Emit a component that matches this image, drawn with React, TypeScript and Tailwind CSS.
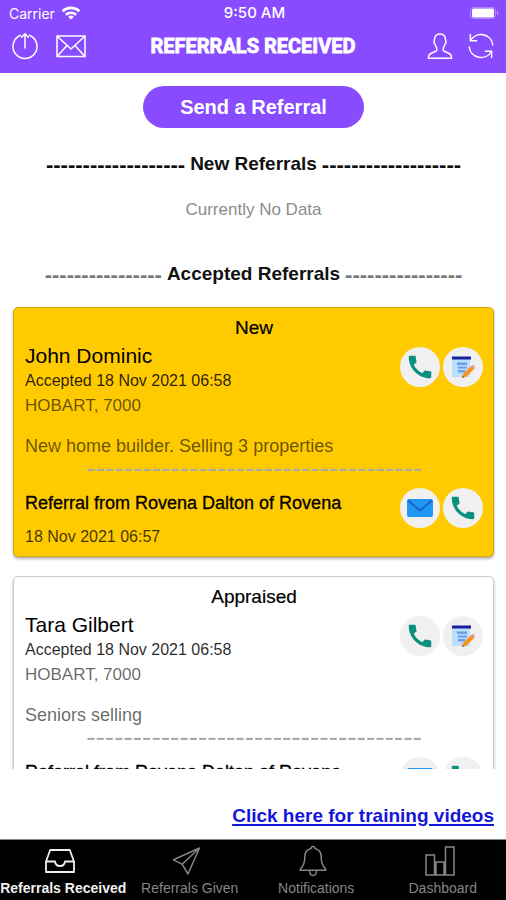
import type { ReactNode } from "react";
import { MdCall } from "react-icons/md";

const SANS = "font-['Liberation_Sans',Arial,sans-serif]";

function LineIcon({ children, size, thick = 1.5 }: { children: ReactNode; size: string; thick?: number }) {
  return (
    <svg
      className={size}
      viewBox="0 0 32 32"
      fill="none"
      stroke="currentColor"
      strokeWidth={thick}
      strokeLinejoin="round"
      strokeLinecap="round"
      aria-hidden="true"
    >
      {children}
    </svg>
  );
}

function WifiIcon() {
  return (
    <svg className="h-4 w-5" viewBox="0 0 20 16" aria-hidden="true">
      <g fill="none" stroke="currentColor" strokeWidth="2.6">
        <path d="M1.6 6.2a12.2 12.2 0 0 1 16.8 0" />
        <path d="M4.9 9.8a7.4 7.4 0 0 1 10.2 0" />
      </g>
      <path d="M10 14.6 7.2 11.9a4 4 0 0 1 5.6 0z" fill="currentColor" />
    </svg>
  );
}

function BatteryIcon() {
  return (
    <svg className="h-3 w-[30px]" viewBox="0 0 30 12" aria-hidden="true">
      <rect x="0.5" y="0.5" width="25" height="11" rx="3" fill="none" stroke="currentColor" opacity="0.35" />
      <rect x="2" y="1.5" width="22" height="9" rx="1.5" fill="currentColor" />
      <path d="M27 4v4c1.6-.6 1.6-3.4 0-4z" fill="currentColor" opacity="0.6" />
    </svg>
  );
}

function Header() {
  return (
    <header className="shrink-0 bg-[#884bff] pb-[7px] text-white">
      <div className="grid h-[26px] grid-cols-[1fr_auto_1fr] items-center pr-[6px] pl-[9px] font-['Inter',sans-serif] text-[14px]">
        <span className="flex items-center gap-[6px]">
          Carrier <WifiIcon />
        </span>
        <span className="text-[15px] font-medium">9:50 AM</span>
        <span className="justify-self-end">
          <BatteryIcon />
        </span>
      </div>
      <div className="grid h-10 grid-cols-[1fr_auto_1fr] items-center px-[9px]">
        <div className="flex items-center gap-[14px]">
          <button type="button" aria-label="Log out">
            <LineIcon size="size-8">
              <path d="M11.6 5.3a12 12 0 1 0 8.8 0" />
              <path d="M16 18V4M12.6 7.2 16 3.8l3.4 3.4" />
            </LineIcon>
          </button>
          <button type="button" aria-label="Messages">
            <LineIcon size="size-8">
              <path d="M2 6h28v20.500H2zM2.500 6.500 16 19 29.500 6.500M2.500 26l9.500-10.500M29.500 26 20 15.500" strokeLinejoin="miter" />
            </LineIcon>
          </button>
        </div>
        <h1 className="font-['Roboto','Liberation_Sans',sans-serif] text-[20px] font-bold [-webkit-text-stroke:0.8px_white]">
          REFERRALS RECEIVED
        </h1>
        <div className="flex items-center justify-end gap-[9px]">
          <button type="button" aria-label="Profile">
            <LineIcon size="size-8">
              <path d="M16 4c-3.800 0-5.800 2.400-5.600 6 0 1-.600 1.500-.300 2.600.2.900.9 1 1 1.800.3 1.800 1.300 2.600 1.600 3.600.3 1.200.1 2-.3 2.800-1.300 1.500-6.600 2-7.600 4.700-.4 1-.400 1.800-.400 2.700h23.200c0-.900 0-1.700-.400-2.700-1-2.700-6.300-3.200-7.600-4.700-.4-.8-.6-1.600-.3-2.800.3-1 1.300-1.800 1.600-3.600.1-.8.8-.9 1-1.800.3-1.100-.3-1.600-.3-2.600.2-3.600-1.800-6-5.600-6z" />
            </LineIcon>
          </button>
          <button type="button" aria-label="Refresh">
            <LineIcon size="size-8">
              <path d="M5.500 10.500A12 12 0 0 1 27.800 15M26.500 21.500A12 12 0 0 1 4.200 17" />
              <path d="M5.400 4.500v6.200h6.200M26.600 27.500v-6.200h-6.200" />
            </LineIcon>
          </button>
        </div>
      </div>
    </header>
  );
}

function SectionHeading({ title, dashes, tone }: { title: string; dashes: number; tone: string }) {
  const line = "-".repeat(dashes);
  return (
    <h2 className="flex h-6 items-center justify-center gap-[5px] text-[19px] font-bold whitespace-nowrap text-[#111]">
      <span className={`text-[22px] ${tone}`}>{line}</span>
      {title}
      <span className={`text-[22px] ${tone}`}>{line}</span>
    </h2>
  );
}

function RoundButton({ label, children }: { label: string; children: ReactNode }) {
  return (
    <button type="button" aria-label={label} className="flex size-10 items-center justify-center rounded-full bg-[#f0f0f0]">
      {children}
    </button>
  );
}

function CallButton() {
  return (
    <RoundButton label="Call">
      <MdCall className="size-[30px] text-[#0b9080]" />
    </RoundButton>
  );
}

function NoteButton() {
  return (
    <RoundButton label="Edit notes">
      <svg className="size-6" viewBox="0 0 24 24" aria-hidden="true">
        <path d="M1 3h18v19H1z" fill="#bbdefb" />
        <path d="M1 1.500h19v3H1z" fill="#1a1f9c" />
        <path d="M6 7.500h10v2.500H6zm1 4h9v2H7zm0 3.500h7v2.500H7z" fill="#6e9ee8" />
        <path d="m11 23 1.200-4.200 8-7.800 3 3-8 7.800z" fill="#f7941d" />
        <path d="m20.200 11 .8-.7c1.600-.6 3 1.200 2.600 2.600l-.4 1.100z" fill="#e8879c" />
        <path d="m11 23 .7-2.300 1.700 1.600z" fill="#8d5a3a" />
      </svg>
    </RoundButton>
  );
}

function MailButton() {
  return (
    <RoundButton label="Email">
      <svg className="h-5 w-[26px]" viewBox="0 0 26 20" aria-hidden="true">
        <rect x="0" y="1" width="26" height="18" rx="2" fill="#2196f3" />
        <path d="M1 2.500 13 12.500 25 2.500" fill="none" stroke="#1565c0" strokeWidth="1.800" />
      </svg>
    </RoundButton>
  );
}

type Referral = { status: string; name: string; note: string; highlighted: boolean };

const referrals: Referral[] = [
  { status: "New", name: "John Dominic", note: "New home builder. Selling 3 properties", highlighted: true },
  { status: "Appraised", name: "Tara Gilbert", note: "Seniors selling", highlighted: false },
];

function ReferralCard({ status, name, note, highlighted }: Referral) {
  return (
    <article
      className={`rounded-[5px] border pt-2 pr-[10px] pb-[7px] pl-[11px] shadow-[0_2px_3px_rgba(0,0,0,0.3)] ${
        highlighted ? "border-[#d0a80c] bg-[#ffcb00]" : "border-[#ccc] bg-white"
      }`}
    >
      <h3 className="text-center text-[19px] leading-6 text-black [-webkit-text-stroke:0.2px_black]">{status}</h3>
      <div className="mt-[3px] flex justify-between">
        <div className="text-[17px] leading-[25px] text-black/60">
          <p className="text-[21px] text-black">{name}</p>
          <p className="text-[16px] text-black/85">Accepted 18 Nov 2021 06:58</p>
          <p>HOBART, 7000</p>
          <p className="mt-4 text-[18px] whitespace-nowrap">{note}</p>
        </div>
        <div className="mt-1 flex shrink-0 gap-[3px] self-start">
          <CallButton />
          <NoteButton />
        </div>
      </div>
      <p className="text-center text-[28px] leading-[18px] whitespace-nowrap text-[#aaa]">{"-".repeat(36)}</p>
      <div className="mt-[11px] flex justify-between">
        <div className="pt-[3px] leading-[25px]">
          <p className="text-[18px] whitespace-nowrap text-black [-webkit-text-stroke:0.3px_black]">
            Referral from Rovena Dalton of Rovena
          </p>
          <p className="mt-2 text-[16px] text-black/75">18 Nov 2021 06:57</p>
        </div>
        <div className="flex shrink-0 gap-[3px] self-start">
          <MailButton />
          <CallButton />
        </div>
      </div>
    </article>
  );
}

const tabs: { label: string; icon: ReactNode }[] = [
  {
    label: "Referrals Received",
    icon: <path d="M2 16.500 6.200 5h19.600L30 16.500V27H2zM2 16.500h9c.4 2.800 2 4.500 5 4.500s4.600-1.700 5-4.500h9" />,
  },
  {
    label: "Referrals Given",
    icon: <path d="M28.500 3 2.500 14.800l8.600 4.400L17 29zM28.500 3 11.100 19.200" />,
  },
  {
    label: "Notifications",
    icon: (
      <>
        <path d="M16 1.500c-1.200 0-1.900.8-1.900 2-4.300.9-6.300 4.400-6.300 8.800 0 6.500-1.300 9-4.600 12v1h25.600v-1c-3.300-3-4.600-5.500-4.600-12 0-4.400-2-7.900-6.300-8.800 0-1.200-.7-2-1.900-2z" />
        <path d="M12.500 26c.2 2.800 1.500 4.500 3.500 4.500s3.300-1.700 3.500-4.500" />
      </>
    ),
  },
  {
    label: "Dashboard",
    icon: <path d="M2 10h8.500v20H2zM12 17h8v13h-8zM21.500 2H30v28h-8.500z" strokeLinejoin="miter" />,
  },
];

export default function App() {
  return (
    <div className={`flex h-screen flex-col bg-white ${SANS}`}>
      <Header />
      <main className="min-h-0 flex-1 overflow-y-auto pt-[13px] pr-3 pl-[13px] [scrollbar-width:none]">
        <button
          type="button"
          className="mx-auto block h-[42px] rounded-full bg-[#884bff] px-[37px] text-[20px] font-bold text-white"
        >
          Send a Referral
        </button>
        <section className="mt-6">
          <SectionHeading title="New Referrals" dashes={19} tone="text-[#111]" />
          <p className="mt-[22px] text-center text-[17px] leading-6 text-[#8c8c8c]">Currently No Data</p>
        </section>
        <section className="mt-10 pb-4">
          <SectionHeading title="Accepted Referrals" dashes={16} tone="text-[#777]" />
          <div className="mt-[21px] flex flex-col gap-[19px]">
            {referrals.map((referral) => (
              <ReferralCard key={referral.name} {...referral} />
            ))}
          </div>
        </section>
      </main>
      <div className="flex h-[70px] shrink-0 items-center justify-end px-3 pt-6">
        <a href="#training" className="text-[19px] font-bold text-[#1414dc] underline decoration-2 underline-offset-2">
          Click here for training videos
        </a>
      </div>
      <nav className="grid h-[61px] shrink-0 grid-cols-4 border-t border-[#888] bg-black pt-[5px]">
        {tabs.map((tab, index) => (
          <a
            key={tab.label}
            href="#tab"
            aria-current={index === 0 ? "page" : undefined}
            className={`flex flex-col items-center text-[14px] leading-[22px] whitespace-nowrap ${
              index === 0 ? "font-bold text-[#f0f0f0]" : "text-[#858585]"
            }`}
          >
            <LineIcon size="mr-[6px] size-8" thick={index === 0 ? 1.8 : 1.5}>
              {tab.icon}
            </LineIcon>
            {tab.label}
          </a>
        ))}
      </nav>
    </div>
  );
}
